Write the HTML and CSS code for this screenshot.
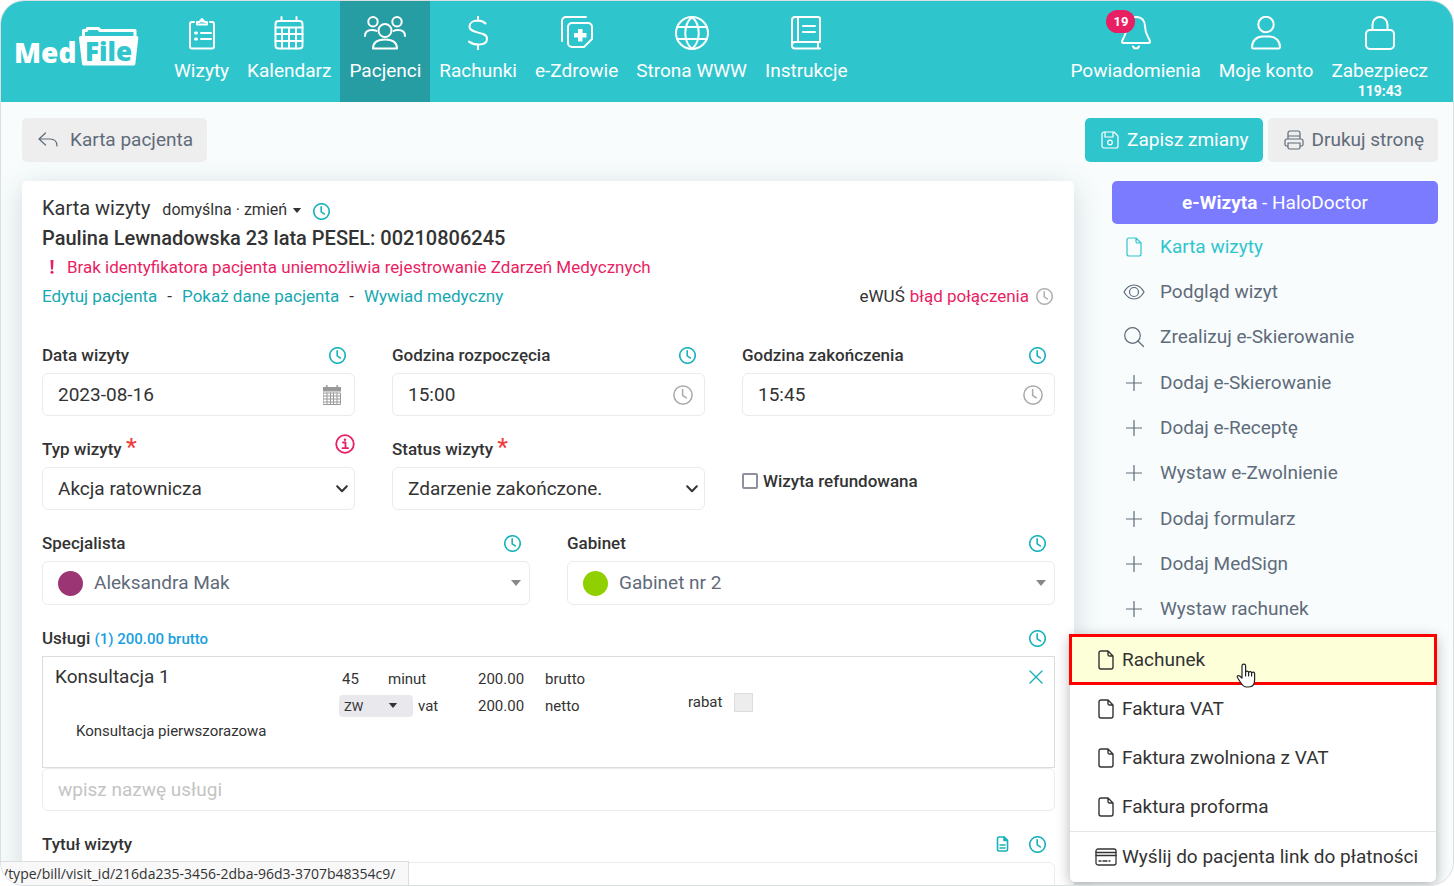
FILE: index.html
```html
<!DOCTYPE html>
<html lang="pl">
<head>
<meta charset="utf-8">
<title>MedFile – Karta wizyty</title>
<link rel="stylesheet" href="styles.css">
</head>
<body>
<svg class="sprite" aria-hidden="true">
  <symbol id="clock" viewBox="0 0 16 16"><circle cx="8" cy="8" r="7.300"/><path d="M7.700 3.600v4.700l2.900 2"/></symbol>
  <symbol id="file" viewBox="0 0 16 20"><path d="M10 1H3a2 2 0 0 0-2 2v14a2 2 0 0 0 2 2h10a2 2 0 0 0 2-2V6zM10 1v3.400A1.600 1.600 0 0 0 11.600 6H15"/></symbol>
  <symbol id="plus" viewBox="0 0 16 16"><path d="M8 .5v15M.5 8h15"/></symbol>
  <symbol id="caret" viewBox="0 0 10 6"><path d="M0 0h10L5 6z"/></symbol>
  <symbol id="chevron" viewBox="0 0 12 8"><path d="M1.200 1.200 6 6.200l4.800-5"/></symbol>
</svg>
<div class="window">
  <header class="topbar">
    <a class="logo" href="#" aria-label="MedFile">
      <span class="logo-med">Med</span>
      <svg class="logo-folder" viewBox="0 0 60 39">
        <path class="folder-back" d="M4.500 10V3.500h3L8.500 1.500h11l1.500 2H56v7"/>
        <path class="folder-front" d="M0 11q-.2-2 2-2h55.500q2 0 1.800 2l-3 26q-.2 1.500-2 1.500H5q-1.800 0-2-1.500z"/>
        <text x="6" y="34">File</text>
      </svg>
    </a>
    <nav class="nav">
      <a href="#"><svg class="nav-icon" viewBox="0 0 34 34"><path d="M9 6H7a2 2 0 0 0-2 2v22.500a2 2 0 0 0 2 2h20a2 2 0 0 0 2-2V8a2 2 0 0 0-2-2h-2M12 8.500V6h2.500a2.700 2.700 0 0 1 5 0H22v2.500zM16 17h10M16 23h10"/><path class="heavy" d="M10.500 17h1M10.500 23h1M17 3.600v1.500"/></svg>Wizyty</a>
      <a href="#"><svg class="nav-icon" viewBox="0 0 34 34"><rect x="3.500" y="5" width="27" height="27.500" rx="3"/><path d="M9.500 1v4M24.500 1v4M3.500 11.500h27M3.500 18h27M3.500 25h27M10 11.500v21M17 11.500v21M24 11.500v21"/></svg>Kalendarz</a>
      <a class="active" href="#"><svg class="nav-icon wide" viewBox="0 0 42 34"><circle cx="21" cy="14.500" r="6.500"/><path d="M9 32.500c0-6 4-9 12-9s12 3 12 9z"/><circle cx="9" cy="5.800" r="4.700"/><circle cx="33" cy="5.800" r="4.700"/><path d="M1 20c0-4 3-6 7-6 2 0 3.500.3 4.500 1M41 20c0-4-3-6-7-6-2 0-3.500.3-4.500 1"/></svg>Pacjenci</a>
      <a href="#"><svg class="nav-icon" viewBox="0 0 34 34"><path d="M17 0v5M17 28.500V34M24.500 7.500C22 5 19 4.600 16.500 4.600c-4.500 0-8 2.300-8 6 0 8 17.500 4 17.500 12 0 4-3.500 6-8 6-3.500 0-7-.8-10-3"/></svg>Rachunki</a>
      <a href="#"><svg class="nav-icon" viewBox="0 0 34 34"><path d="M2 25V5a4 4 0 0 1 4-4h20M12 7h16a4 4 0 0 1 4 4v12l-8 8H12a4 4 0 0 1-4-4V11a4 4 0 0 1 4-4z"/><path class="solid" d="M18 13h4.500v4h4v4.500h-4v4H18v-4h-4V17h4z"/></svg>e-Zdrowie</a>
      <a href="#"><svg class="nav-icon" viewBox="0 0 34 34"><circle cx="17" cy="17" r="16"/><path d="M17 1C8 9 8 25 17 33M17 1c9 8 9 24 0 32M2.500 11h29M2.500 23h29"/></svg>Strona WWW</a>
      <a href="#"><svg class="nav-icon" viewBox="0 0 34 34"><path d="M31 32.500H6a3 3 0 0 1-3-3V4a3 3 0 0 1 3-3h23a2 2 0 0 1 2 2v23H6a3 3 0 0 0-3 3M9 1v25M29 26v6M14 10h12M14 16h12"/></svg>Instrukcje</a>
    </nav>
    <nav class="nav account">
      <a href="#"><svg class="nav-icon" viewBox="0 0 34 34"><path d="M17 1c-6 0-9 4-9 9.500 0 9-5 12-5 15 0 1 .5 1.500 1.500 1.500h25c1 0 1.500-.5 1.500-1.500 0-3-5-6-5-15C26 5 23 1 17 1zM14 30.500a3.300 3.300 0 0 0 6 0"/></svg>Powiadomienia<span class="badge">19</span></a>
      <a href="#"><svg class="nav-icon" viewBox="0 0 34 34"><circle cx="17" cy="8.500" r="7.700"/><path d="M3 31c0-6 4.500-10.500 10.500-10.500h7C26.500 20.500 31 25 31 31a1.500 1.500 0 0 1-1.500 1.500h-25A1.500 1.500 0 0 1 3 31z"/></svg>Moje konto</a>
      <a href="#"><svg class="nav-icon" viewBox="0 0 34 34"><rect x="3" y="14" width="28" height="19" rx="4"/><path d="M9.500 14V8.500a7.500 7.500 0 0 1 15 0V14"/></svg>Zabezpiecz<span class="timer">119:43</span></a>
    </nav>
  </header>

  <div class="toolbar">
    <button class="btn" type="button"><svg class="icon-20 back" viewBox="0 0 20 20"><path d="M7.500 3 1 9l6.500 6M1 9h11q7 0 7 7"/></svg>Karta pacjenta</button>
    <span class="spacer"></span>
    <button class="btn primary" type="button"><svg class="icon-18" viewBox="0 0 18 18"><path d="M3 1h10l4 4v10a2 2 0 0 1-2 2H3a2 2 0 0 1-2-2V3a2 2 0 0 1 2-2zM4 1v5h8V1.500"/><circle cx="9" cy="11.500" r="2.300"/></svg>Zapisz zmiany</button>
    <button class="btn" type="button"><svg class="icon-20" viewBox="0 0 20 20"><path d="M4 9V3a2 2 0 0 1 2-2h8a2 2 0 0 1 2 2v6M4 16H2.500A1.500 1.500 0 0 1 1 14.500V11a2 2 0 0 1 2-2h14a2 2 0 0 1 2 2v3.500a1.500 1.500 0 0 1-1.500 1.500H16M4 13h12v4.500a1.500 1.500 0 0 1-1.500 1.500h-9A1.500 1.500 0 0 1 4 17.500zM4 6h12"/></svg>Drukuj stronę</button>
  </div>

  <div class="content">
    <main class="card">
      <div class="card-title"><h1>Karta wizyty</h1><button class="template" type="button">domyślna · zmień <svg class="caret"><use href="#caret"/></svg></button><svg class="clock"><use href="#clock"/></svg></div>
      <h2>Paulina Lewnadowska 23 lata PESEL: 00210806245</h2>
      <p class="warning"><svg class="bang" viewBox="0 0 4 14"><path d="M.5 0h3L3 9.500H1z"/><circle cx="2" cy="12.300" r="1.500"/></svg>Brak identyfikatora pacjenta uniemożliwia rejestrowanie Zdarzeń Medycznych</p>
      <div class="links"><a href="#">Edytuj pacjenta</a><span>-</span><a href="#">Pokaż dane pacjenta</a><span>-</span><a href="#">Wywiad medyczny</a><p class="ewus">eWUŚ <b>błąd połączenia</b><svg class="clock gray"><use href="#clock"/></svg></p></div>

      <form class="form">
        <div class="row three">
          <div class="field"><div class="label"><label for="date">Data wizyty</label><svg class="clock"><use href="#clock"/></svg></div>
            <div class="control"><input id="date" type="text" value="2023-08-16"><svg class="inner-icon calendar" viewBox="0 0 18 20"><path class="cal-top" d="M0 2h18v4.500H0zM3 0h1.500v2H3zM13.500 0H15v2h-1.500z"/><path class="cal-grid" d="M.5 8h17v11.500H.5zM.5 11h17M.5 14h17M.5 17h17M4 8v11.500M7.500 8v11.500M10.500 8v11.500M14 8v11.500"/></svg></div></div>
          <div class="field"><div class="label"><label for="from">Godzina rozpoczęcia</label><svg class="clock"><use href="#clock"/></svg></div>
            <div class="control"><input id="from" type="text" value="15:00"><svg class="inner-icon time"><use href="#clock"/></svg></div></div>
          <div class="field"><div class="label"><label for="to">Godzina zakończenia</label><svg class="clock"><use href="#clock"/></svg></div>
            <div class="control"><input id="to" type="text" value="15:45"><svg class="inner-icon time"><use href="#clock"/></svg></div></div>
        </div>
        <div class="row three">
          <div class="field"><div class="label info-label"><label for="type">Typ wizyty <span class="star">*</span></label><svg class="info" viewBox="0 0 20 20"><circle cx="10" cy="10" r="8.800"/><path d="M8 8.500h2.500v5.500M7.500 14.200h5.500"/><circle class="dot-i" cx="10" cy="5.700" r="1.200"/></svg></div>
            <div class="control"><select id="type"><option>Akcja ratownicza</option></select><svg class="chevron"><use href="#chevron"/></svg></div></div>
          <div class="field"><div class="label"><label for="status">Status wizyty <span class="star">*</span></label></div>
            <div class="control"><select id="status"><option>Zdarzenie zakończone.</option></select><svg class="chevron"><use href="#chevron"/></svg></div></div>
          <label class="check"><input type="checkbox">Wizyta refundowana</label>
        </div>
        <div class="row two">
          <div class="field"><div class="label"><label for="doctor">Specjalista</label><svg class="clock"><use href="#clock"/></svg></div>
            <div class="control soft"><span class="dot plum"></span><select id="doctor"><option>Aleksandra Mak</option></select><svg class="arrow"><use href="#caret"/></svg></div></div>
          <div class="field"><div class="label"><label for="room">Gabinet</label><svg class="clock"><use href="#clock"/></svg></div>
            <div class="control soft"><span class="dot lime"></span><select id="room"><option>Gabinet nr 2</option></select><svg class="arrow"><use href="#caret"/></svg></div></div>
        </div>
        <div class="field"><div class="label"><label for="service">Usługi <span class="sum">(1) 200.00 brutto</span></label><svg class="clock"><use href="#clock"/></svg></div>
          <div class="service">
            <div class="service-name"><p>Konsultacja 1</p><small>Konsultacja pierwszorazowa</small></div>
            <div class="service-col">
              <div class="line"><input class="minutes" type="text" value="45" aria-label="Czas w minutach"><span>minut</span></div>
              <div class="line vat-line"><span class="vat"><select aria-label="Stawka VAT"><option>ZW</option></select><svg class="caret"><use href="#caret"/></svg></span><span>vat</span></div>
            </div>
            <div class="service-col">
              <div class="line"><input class="price" type="text" value="200.00" aria-label="Cena brutto"><span>brutto</span></div>
              <div class="line"><input class="price" type="text" value="200.00" aria-label="Cena netto"><span>netto</span></div>
            </div>
            <label class="discount">rabat <input type="text"></label>
            <button class="remove" type="button" aria-label="Usuń"><svg viewBox="0 0 14 14"><path d="m1 1 12 12M13 1 1 13"/></svg></button>
          </div>
          <div class="control"><input id="service" type="text" placeholder="wpisz nazwę usługi"></div>
        </div>
        <div class="field"><div class="label"><label for="subject">Tytuł wizyty</label><span class="label-icons"><svg class="doc" viewBox="0 0 12 16"><path d="M7.500 1H2.500A1.500 1.500 0 0 0 1 2.500v11A1.500 1.500 0 0 0 2.500 15h7a1.500 1.500 0 0 0 1.500-1.500v-9zM3.500 9h5M3.500 12h5"/><path class="fold" d="M7.500 1v3.500H11z"/></svg><svg class="clock"><use href="#clock"/></svg></span></div>
          <div class="control"><input id="subject" type="text"></div></div>
      </form>
    </main>

    <aside class="sidebar">
      <button class="visit" type="button"><b>e-Wizyta</b> - HaloDoctor</button>
      <ul class="actions">
        <li><a class="current" href="#"><svg class="i-file"><use href="#file"/></svg>Karta wizyty</a></li>
        <li><a href="#"><svg class="i-eye" viewBox="0 0 22 16"><path d="M1 8c2.500-4.500 6-7 10-7s7.500 2.500 10 7c-2.500 4.500-6 7-10 7S3.500 12.500 1 8z"/><circle cx="11" cy="8" r="4.500"/></svg>Podgląd wizyt</a></li>
        <li><a href="#"><svg class="i-20" viewBox="0 0 20 20"><circle cx="8.500" cy="8.500" r="7.800"/><path d="m14 14 5.500 5.500"/></svg>Zrealizuj e-Skierowanie</a></li>
        <li><a href="#"><svg class="i-plus"><use href="#plus"/></svg>Dodaj e-Skierowanie</a></li>
        <li><a href="#"><svg class="i-plus"><use href="#plus"/></svg>Dodaj e-Receptę</a></li>
        <li><a href="#"><svg class="i-plus"><use href="#plus"/></svg>Wystaw e-Zwolnienie</a></li>
        <li><a href="#"><svg class="i-plus"><use href="#plus"/></svg>Dodaj formularz</a></li>
        <li><a href="#"><svg class="i-plus"><use href="#plus"/></svg>Dodaj MedSign</a></li>
        <li><a href="#"><svg class="i-plus"><use href="#plus"/></svg>Wystaw rachunek</a></li>
      </ul>
      <div class="menu">
        <a class="hovered" href="#"><svg class="i-file"><use href="#file"/></svg>Rachunek
          <svg class="pointer" viewBox="0 0 20 25"><path d="M6 15V3a1.800 1.800 0 0 1 3.600 0v6.500a1.500 1.500 0 0 1 3 .3 1.500 1.500 0 0 1 3 .6 1.500 1.500 0 0 1 3 .6v6c0 4-2 7-6 7h-2c-3 0-4.500-2-6-4.500l-3.200-5c-.8-1.400 1-2.500 2.200-1.500zM9.600 9.500V13M12.600 10v3M15.600 10.500V13"/></svg></a>
        <a href="#"><svg class="i-file"><use href="#file"/></svg>Faktura VAT</a>
        <a href="#"><svg class="i-file"><use href="#file"/></svg>Faktura zwolniona z VAT</a>
        <a href="#"><svg class="i-file"><use href="#file"/></svg>Faktura proforma</a>
        <a class="last" href="#"><svg class="i-card" viewBox="0 0 22 18"><rect x="1" y="1" width="20" height="16" rx="2"/><path d="M1 4.500h20M1 7.500h20M4 13h2M8 13h4M14 13h1"/></svg>Wyślij do pacjenta link do płatności</a>
      </div>
    </aside>
  </div>
  <div class="status">/type/bill/visit_id/216da235-3456-2dba-96d3-3707b48354c9/</div>
</div>
</body>
</html>
```
FILE: styles.css
```css
* { box-sizing: border-box; }
body { margin: 0; background: #fff; color: #333; font: 19px/24px Roboto, "Liberation Sans", sans-serif; }
h1, h2, p, ul { margin: 0; padding: 0; font-weight: 400; }
ul { list-style: none; }
a { color: inherit; text-decoration: none; }
button, input, select { font: inherit; color: inherit; }
button { border: 0; background: none; cursor: pointer; }
svg { flex: none; fill: none; stroke: currentColor; stroke-linecap: round; stroke-linejoin: round; }
.sprite { position: absolute; width: 0; height: 0; }

.window { position: relative; display: flex; flex-direction: column; height: 100vh; overflow: hidden; border: 1px solid #dcdfe0; border-radius: 24px; background: #f8fcfd; }

.topbar { display: flex; flex: none; justify-content: space-between; height: 101px; padding-right: 16px; background: #2fc5cd; color: #fff; }
.logo { display: flex; align-items: flex-start; width: 150px; padding: 26px 0 0 13px; }
.logo-med { width: 65px; font: 800 28px/50px "Open Sans", sans-serif; }
.logo-folder { width: 60px; height: 39px; stroke: none; overflow: visible; }
.folder-back { stroke: #fff; stroke-width: 3; }
.folder-front { fill: #fff; }
.logo-folder text { fill: #2fc5cd; font: 800 26px "Open Sans", sans-serif; }
.nav { display: flex; }
.logo + .nav { margin-right: auto; padding-left: 14px; }
.nav a { position: relative; display: flex; flex-direction: column; align-items: center; gap: 9px; padding: 15px 9px 0; }
.nav .active { background: #269da3; }
.nav-icon { width: 34px; height: 34px; stroke-width: 2; }
.nav-icon.wide { width: 42px; }
.heavy { stroke-width: 3; }
.solid { fill: #fff; stroke: none; }
.badge { position: absolute; top: 9px; left: 45px; width: 29px; border-radius: 12px; background: #e91e63; font: 700 13px/23px Roboto, sans-serif; text-align: center; }
.timer { margin-top: -11px; font: 700 14px/20px Roboto, sans-serif; }

.toolbar { display: flex; flex: none; gap: 5px; padding: 16px 15px 19px 21px; }
.spacer { flex: 1; }
.btn { display: flex; align-items: center; gap: 8px; height: 44px; padding: 0 14px 0 16px; border-radius: 5px; background: #eee; color: #5f6b7a; }
.btn.primary { background: #2fc5cd; color: #fff; }
.icon-18 { width: 18px; height: 18px; stroke-width: 1.200; }
.icon-20 { width: 20px; height: 20px; stroke-width: 1.200; }
.back { margin-right: 4px; }

.content { display: flex; flex: none; align-items: flex-start; gap: 38px; padding: 0 15px 0 21px; }
.card { flex: 1; padding: 12px 19px 30px 20px; border-radius: 5px; background: #fff; box-shadow: 0 6px 30px rgba(60, 90, 90, .2); }
.card-title { display: flex; align-items: center; height: 30px; }
h1 { font-size: 20px; }
.template { display: flex; align-items: center; gap: 5px; margin-top: 4px; padding: 0 11px 0 12px; font-size: 16px; }
.caret { width: 10px; height: 5px; fill: currentColor; stroke: none; }
.clock { width: 17px; height: 17px; stroke-width: 1.500; color: #17b2bb; }
.card-title .clock { margin-top: 6px; }
h2 { font-size: 20px; font-weight: 500; line-height: 30px; }
.warning { display: flex; align-items: center; gap: 13px; padding-left: 8px; color: #e91e63; font-size: 17px; line-height: 28px; }
.bang { width: 4px; height: 14px; fill: currentColor; stroke: none; }
.links { display: flex; gap: 10px; font-size: 17px; line-height: 30px; }
.links a { color: #17a8b1; }
.ewus { display: flex; align-items: center; gap: 5px; margin-left: auto; }
.ewus b { color: #e91e63; font-weight: 400; }
.ewus .clock { margin: 0 2px; color: #b4b4b4; }

.form { display: grid; gap: 13px; margin-top: 24px; }
.row { display: grid; column-gap: 37px; }
.three { grid-template-columns: repeat(3, 1fr); }
.two { grid-template-columns: repeat(2, 1fr); }
.label { display: flex; align-items: center; justify-content: space-between; height: 38px; padding: 2px 9px 0 0; font-size: 17px; font-weight: 500; }
.info-label { padding-right: 0; }
.info { width: 20px; height: 20px; margin-bottom: 10px; stroke-width: 1.800; color: #e91e63; }
.dot-i { fill: currentColor; stroke: none; }
.star { color: #f03e3e; font-size: 24px; line-height: 20px; }
.sum { color: #1a9fe0; font-size: 15px; }
.label-icons { display: flex; align-items: center; gap: 20px; }
.doc { width: 13px; height: 16px; stroke-width: 1.600; color: #17b2bb; }
.fold { fill: currentColor; }
.control { position: relative; display: flex; align-items: center; height: 43px; border: 1px solid #e9ebef; border-radius: 6px; background: #fff; }
.control input, .control select { flex: 1; min-width: 0; height: 100%; padding: 0 15px; border: 0; outline: 0; background: none; appearance: none; }
.control input::placeholder { color: #c4c4c4; opacity: 1; }
.control.soft { height: 44px; }
.soft select { padding-left: 11px; color: #5f6b7a; }
.inner-icon { position: absolute; right: 11px; width: 20px; height: 20px; stroke-width: 1.200; color: #a9a9a9; pointer-events: none; }
.calendar { right: 13px; width: 18px; color: #999; }
.cal-top { fill: currentColor; stroke: none; }
.cal-grid { stroke-width: 1; }
.chevron { position: absolute; right: 6px; width: 12px; height: 8px; stroke-width: 2; pointer-events: none; }
.arrow { position: absolute; right: 8px; width: 10px; height: 6px; fill: #888; stroke: none; pointer-events: none; }
.dot { width: 25px; height: 25px; margin-left: 15px; border-radius: 50%; }
.plum { background: #9c3573; }
.lime { background: #90d000; }
.check { display: flex; align-items: center; align-self: center; gap: 5px; margin-top: 22px; font-size: 17px; font-weight: 500; }
.check input { width: 16px; height: 16px; margin: 0; border: 2px solid #8f8f9d; border-radius: 2px; background: #fff; appearance: none; }

.service { display: grid; grid-template-columns: 284px 139px 210px auto 1fr; height: 112px; padding: 8px 11px 0 12px; border: 1px solid #dcdcdc; font-size: 15px; }
.service-name p { font-size: 19px; }
.service-name small { display: block; margin: 30px 0 0 21px; font-size: 15px; }
.line { display: flex; align-items: center; height: 27px; }
.line input { padding: 0; border: 0; background: none; }
.minutes { width: 49px; }
.line .minutes { padding-left: 3px; }
.price { width: 67px; }
.vat-line { gap: 5px; }
.vat { position: relative; display: flex; align-items: center; }
.vat select { width: 74px; height: 22px; padding: 0 5px; border: 0; border-radius: 4px; background: #e9e9ed; font-size: 13px; appearance: none; }
.vat .caret { position: absolute; right: 15px; pointer-events: none; }
.discount { display: flex; gap: 12px; align-items: center; align-self: start; margin-top: 25px; }
.discount input { width: 19px; height: 19px; padding: 0; border: 1px solid #ddd; background: #ededed; }
.remove { justify-self: end; align-self: start; display: flex; margin-top: 5px; padding: 0; color: #17b2bb; }
.remove svg { width: 14px; height: 14px; stroke-width: 1.400; }

.sidebar { position: relative; flex: none; width: 326px; }
.visit { display: block; width: 100%; height: 43px; border-radius: 5px; background: #7b7bff; color: #fff; }
.visit b { font-weight: 700; }
.actions { display: grid; grid-auto-rows: 1fr; min-height: 408px; color: #5f6b7a; }
.actions a { display: grid; grid-template-columns: 43px 1fr; align-items: center; justify-items: start; gap: 5px; height: 100%; }
.actions svg { justify-self: center; stroke-width: 1.200; }
.actions .current { color: #2fc5cd; }
.i-file { width: 16px; height: 20px; stroke-width: 1.400; }
.i-eye { width: 22px; height: 16px; }
.i-20 { width: 20px; height: 20px; }
.i-plus { width: 16px; height: 16px; }
.menu { position: absolute; top: 454px; right: 2px; width: 366px; border-radius: 0 0 5px 5px; background: #fff; box-shadow: 0 3px 14px rgba(0, 0, 0, .3); }
.menu a { position: relative; display: grid; grid-template-columns: 22px auto; justify-content: start; align-items: center; gap: 5px; height: 49px; padding-left: 25px; }
.menu a > svg:first-child { justify-self: center; }
.menu .hovered { background: #fdffd9; outline: 3px solid #fe0000; outline-offset: -2px; }
.menu .last { height: 51px; border-top: 1px solid #e5e5e5; }
.i-card { width: 22px; height: 18px; stroke-width: 1.300; }
.menu .pointer { position: absolute; top: 28px; left: 166px; z-index: 1; width: 20px; height: 25px; fill: #fff; stroke: #222; stroke-width: 1.200; }

.status { position: absolute; bottom: 0; left: 0; padding: 0 13px 0 2px; border-top: 1px solid #ddd; border-right: 1px solid #ddd; background: #f8f8f8; font: 14px/23px "Open Sans", sans-serif; }
```
